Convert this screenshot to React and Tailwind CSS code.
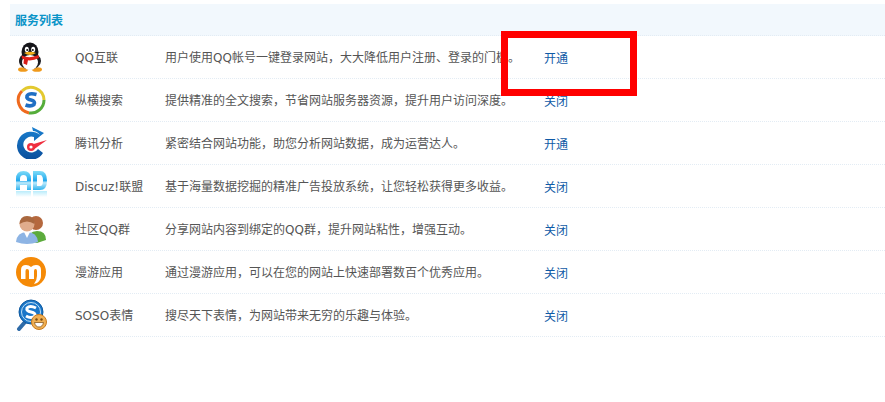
const QQIcon = () => (
  <svg width="28" height="30" viewBox="0 0 28 30">
    <ellipse cx="7" cy="27.5" rx="5" ry="2.3" fill="#f09a1c" />
    <ellipse cx="21" cy="27.5" rx="5" ry="2.3" fill="#f09a1c" />
    <ellipse cx="14" cy="10" rx="8.5" ry="9.5" fill="#15151a" />
    <ellipse cx="14" cy="19" rx="11" ry="8.5" fill="#1b1b20" />
    <ellipse cx="14" cy="20.5" rx="8" ry="7.5" fill="#fff" />
    <ellipse cx="10.8" cy="7.5" rx="2" ry="2.8" fill="#fff" />
    <ellipse cx="17.2" cy="7.5" rx="2" ry="2.8" fill="#fff" />
    <circle cx="11.2" cy="8" r="1" fill="#111" />
    <circle cx="16.8" cy="8" r="1" fill="#111" />
    <path d="M8 11 Q14 8.5 20 11 Q14 15 8 11Z" fill="#f5b01c" />
    <path d="M5.5 13.5 Q14 17 22.5 13 L23 16 Q14 20.5 6 16.5Z" fill="#e0201c" />
    <path d="M8 16.5 L12 18 L11 23 L7.5 21.5Z" fill="#d81c18" />
  </svg>
)

const SearchIcon = () => (
  <svg width="30" height="30" viewBox="0 0 30 30">
    <circle cx="15" cy="15" r="12" fill="#fff" />
    <path d="M6 6 A13 13 0 0 1 28 15" fill="none" stroke="#e3c92f" strokeWidth="3" />
    <path d="M28 15 A13 13 0 0 1 13 27.9" fill="none" stroke="#55ad3a" strokeWidth="3" />
    <path d="M13 27.9 A13 13 0 0 1 6 6" fill="none" stroke="#ef6a1e" strokeWidth="3" />
    <path d="M20.5 9.5 Q13 7.5 11 11 Q10 14 15 15 Q20 16.5 18 19.5 Q15 22 9.5 20" fill="none" stroke="#1f6fc4" strokeWidth="3.6" />
  </svg>
)

const AnalyticsIcon = () => (
  <svg width="32" height="32" viewBox="0 0 32 32">
    <defs>
      <linearGradient id="analytics-blue" x1="0" y1="0" x2="0" y2="1">
        <stop offset="0" stopColor="#1a80d0" />
        <stop offset="1" stopColor="#0b4f9c" />
      </linearGradient>
    </defs>
    <path d="M24 8 A14 14 0 1 0 27 26 L22 22 A8 8 0 1 1 18 10 L18 14 L28 6 L16 0 L17 4 Q21 4 24 8Z" fill="url(#analytics-blue)" />
    <path d="M11 19 L31 13 L17 23Z" fill="#ef2f3f" />
    <circle cx="15" cy="20" r="4" fill="#ef2f3f" />
    <circle cx="15" cy="20" r="1.6" fill="#fff" />
  </svg>
)

const AdIcon = () => (
  <svg width="32" height="32" viewBox="0 0 32 32">
    <defs>
      <linearGradient id="ad-blue" x1="0" y1="0" x2="0" y2="1">
        <stop offset="0" stopColor="#7fdcf8" />
        <stop offset="0.5" stopColor="#22a9ee" />
        <stop offset="0.62" stopColor="#bdeafb" />
        <stop offset="1" stopColor="#2fb3ef" />
      </linearGradient>
      <linearGradient id="ad-fade" x1="0" y1="0" x2="0" y2="1">
        <stop offset="0" stopColor="#b9ecfb" />
        <stop offset="1" stopColor="#ffffff" />
      </linearGradient>
    </defs>
    <path d="M0 20 V9 Q0 1 7.5 1 Q15 1 15 9 V20 H11 V15 H4 V20Z M4 11 H11 V9 Q11 5 7.5 5 Q4 5 4 9Z" fill="url(#ad-blue)" fillRule="evenodd" />
    <path d="M17 1 H24 Q31 1 31 10.5 Q31 20 24 20 H17Z M21 5 V16 H24 Q27 16 27 10.5 Q27 5 24 5Z" fill="url(#ad-blue)" fillRule="evenodd" />
    <rect x="0" y="21" width="15" height="6" fill="url(#ad-fade)" />
    <rect x="17" y="21" width="14" height="6" fill="url(#ad-fade)" />
  </svg>
)

const GroupIcon = () => (
  <svg width="30" height="32" viewBox="0 0 30 32">
    <circle cx="20" cy="10" r="7" fill="#b5683e" />
    <path d="M12 28 Q12 18 21 18 Q30 18 30 27 L21 30Z" fill="#5cab3c" />
    <circle cx="11" cy="11" r="7.5" fill="#e0ac8c" />
    <path d="M3.5 11 Q4 3 11 3 Q19 3 18.5 11 Q11 6 3.5 11Z" fill="#a9683f" />
    <path d="M0 29 Q1 19 11 19 Q21 19 22 29 Q11 33 0 29Z" fill="#8db4e4" />
    <path d="M8 19 L11 25 L14 19Z" fill="#fff" />
  </svg>
)

const ManyouIcon = () => (
  <svg width="30" height="30" viewBox="0 0 30 30">
    <circle cx="15" cy="15" r="15" fill="#f58a07" />
    <path d="M5 22 V13 Q5 8 10 8 Q13 8 15 10 Q17 8 20 8 Q25 8 25 13 V19 Q25 23 21 26 L18 27 Q21 23 21 19 V14 Q21 12 19.5 12 Q18 12 18 14 V22 H13 V14 Q13 12 11 12 Q9.5 12 9.5 14 V22Z" fill="#fff" />
  </svg>
)

const SosoIcon = () => (
  <svg width="31" height="32" viewBox="0 0 31 32">
    <path d="M3 30 L9 23" stroke="#2f6ba8" strokeWidth="4" strokeLinecap="round" />
    <circle cx="15" cy="13" r="12" fill="#1a76c8" stroke="#0f5aa0" strokeWidth="1" />
    <circle cx="15" cy="13" r="9.5" fill="none" stroke="#bfe0f6" strokeWidth="1" />
    <path d="M20 9 Q14 6 11 9 Q10 12 15 13 Q20 14 19 17 Q15 20 10 17" fill="none" stroke="#fff" strokeWidth="3" />
    <circle cx="23" cy="23" r="7.5" fill="#f0b054" stroke="#c97a1c" strokeWidth="1" />
    <circle cx="20.5" cy="20.5" r="1.2" fill="#7a4a10" />
    <circle cx="25.5" cy="20.5" r="1.2" fill="#7a4a10" />
    <path d="M18.5 23.5 H27.5 Q26.5 28 23 28 Q19.5 28 18.5 23.5Z" fill="#fff" stroke="#7a4a10" strokeWidth="0.7" />
  </svg>
)

const services = [
  { icon: <QQIcon />, name: 'QQ互联', desc: '用户使用QQ帐号一键登录网站，大大降低用户注册、登录的门槛。', status: '开通' },
  { icon: <SearchIcon />, name: '纵横搜索', desc: '提供精准的全文搜索，节省网站服务器资源，提升用户访问深度。', status: '关闭' },
  { icon: <AnalyticsIcon />, name: '腾讯分析', desc: '紧密结合网站功能，助您分析网站数据，成为运营达人。', status: '开通' },
  { icon: <AdIcon />, name: 'Discuz!联盟', desc: '基于海量数据挖掘的精准广告投放系统，让您轻松获得更多收益。', status: '关闭' },
  { icon: <GroupIcon />, name: '社区QQ群', desc: '分享网站内容到绑定的QQ群，提升网站粘性，增强互动。', status: '关闭' },
  { icon: <ManyouIcon />, name: '漫游应用', desc: '通过漫游应用，可以在您的网站上快速部署数百个优秀应用。', status: '关闭' },
  { icon: <SosoIcon />, name: 'SOSO表情', desc: '搜尽天下表情，为网站带来无穷的乐趣与体验。', status: '关闭' },
]

export default function App() {
  return (
    <div className="relative h-[402px] w-[885px] overflow-hidden bg-white pl-[10px] pt-[4px] text-[12px] text-[#555] font-['DejaVu_Sans','Noto_Sans_CJK_SC',sans-serif]">
      <h2 className="h-[32px] border-b border-dotted border-[#e3ecf4] bg-[#f2f8fd] pl-[5px] text-[12px] font-bold leading-[34px] text-[#0a94c8]">
        服务列表
      </h2>
      {services.map((s) => (
        <div key={s.name} className="flex h-[43px] items-center border-b border-dotted border-[#e3ecf4]">
          <div className="flex w-[65px] justify-start pl-[6px]">{s.icon}</div>
          <div className="w-[90px] pt-[2px]">{s.name}</div>
          <div className="w-[379px] pt-[2px] whitespace-nowrap">{s.desc}</div>
          <a className="pt-[3px] text-[#0f5aa6]">{s.status}</a>
        </div>
      ))}
      <div className="absolute left-[501px] top-[31px] h-[65px] w-[136px] border-[7px] border-[#ff0000]" />
    </div>
  )
}
